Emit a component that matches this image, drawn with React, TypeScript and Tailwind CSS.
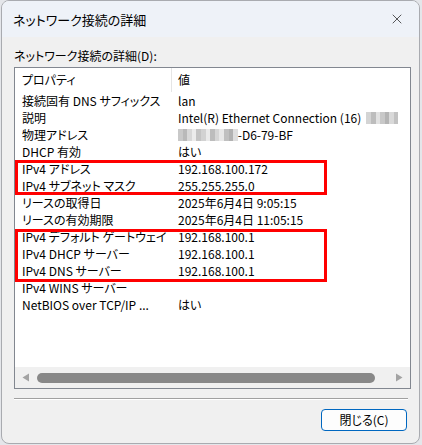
import { X } from "lucide-react"

const rows: { name: string; value: string; blur?: "tail" | "head" }[] = [
  { name: "接続固有 DNS サフィックス", value: "lan" },
  { name: "説明", value: "Intel(R) Ethernet Connection (16)", blur: "tail" },
  { name: "物理アドレス", value: "-D6-79-BF", blur: "head" },
  { name: "DHCP 有効", value: "はい" },
  { name: "IPv4 アドレス", value: "192.168.100.172" },
  { name: "IPv4 サブネット マスク", value: "255.255.255.0" },
  { name: "リースの取得日", value: "2025年6月4日 9:05:15" },
  { name: "リースの有効期限", value: "2025年6月4日 11:05:15" },
  { name: "IPv4 デフォルト ゲートウェイ", value: "192.168.100.1" },
  { name: "IPv4 DHCP サーバー", value: "192.168.100.1" },
  { name: "IPv4 DNS サーバー", value: "192.168.100.1" },
  { name: "IPv4 WINS サーバー", value: "" },
  { name: "NetBIOS over TCP/IP ...", value: "はい" },
]

const tailPixels = ["#d4d4d4", "#bdbdbd", "#e2e2e2", "#c8c8c8", "#b4b4b4", "#d9d9d9", "#c2c2c2"]
const headPixels = [
  "#c9c9c9", "#b9b9b9", "#d8d8d8", "#ececec", "#c4c4c4", "#d2d2d2", "#eaeaea",
  "#bdbdbd", "#d6d6d6", "#e8e8e8", "#c0c0c0", "#b2b2b2", "#dedede",
]

function Pixels({ colors }: { colors: string[] }) {
  return (
    <span className="inline-flex h-[12px] items-stretch">
      {colors.map((c, i) => (
        <span key={i} className="w-[4.6px]" style={{ backgroundColor: c }} />
      ))}
    </span>
  )
}

export default function App() {
  return (
    <div className="h-[445px] w-[422px] bg-[#e4e6ea] font-['Noto_Sans_CJK_JP','Noto_Sans',sans-serif] text-[12px] text-black [font-feature-settings:'palt']">
      <div className="ml-[1px] flex h-[444px] w-[419px] flex-col overflow-hidden rounded-[8px] border border-[#a9abb0] bg-[#f0f0f0]">
        {/* title bar */}
        <div className="flex h-[36px] shrink-0 items-center justify-between bg-[#eef2f8] pl-[11px] pr-[14px]">
          <span className="text-[13px] leading-none">ネットワーク接続の詳細</span>
          <X className="h-[16px] w-[16px] text-[#1b1b1b]" strokeWidth={1.1} />
        </div>

        <div className="flex flex-col px-[12px] pt-[11px]">
          <div className="leading-[16px]">ネットワーク接続の詳細(D):</div>

          {/* list view */}
          <div className="relative mt-[3px] flex h-[322px] w-[397px] flex-col border border-[#828790] bg-white">
            <div className="flex h-[24px] shrink-0 items-center">
              <div className="flex h-full w-[157px] items-center border-r border-[#e5e5e5] pl-[7px]">プロパティ</div>
              <div className="pl-[6px]">値</div>
            </div>
            <div className="flex flex-col">
              {rows.map((r) => (
                <div key={r.name} className="flex h-[17px] items-center whitespace-nowrap leading-[17px]">
                  <div className="w-[157px] shrink-0 pl-[7px]">{r.name}</div>
                  <div className="flex items-center pl-[6px]">
                    {r.blur === "head" && <Pixels colors={headPixels} />}
                    <span>{r.value}</span>
                    {r.blur === "tail" && (
                      <span className="ml-[5px] flex">
                        <Pixels colors={tailPixels} />
                      </span>
                    )}
                  </div>
                </div>
              ))}
            </div>

            {/* red annotations */}
            <div className="absolute left-[0px] top-[92px] h-[35px] w-[312px] border-[3px] border-[#ff0000]" />
            <div className="absolute left-[0px] top-[161px] h-[53px] w-[312px] border-[3px] border-[#ff0000]" />

            {/* horizontal scrollbar */}
            <div className="mt-auto flex h-[21px] items-center bg-[#f0f0f0] px-[7px]">
              <svg width="8" height="9" viewBox="0 0 8 9" className="shrink-0">
                <path d="M7 0.5 L0.5 4.5 L7 8.5 Z" fill="#a3a3a3" />
              </svg>
              <div className="mx-[7px] mr-[20px] h-[10px] flex-1 rounded-full bg-[#888888]" />
              <svg width="8" height="9" viewBox="0 0 8 9" className="shrink-0">
                <path d="M1 0.5 L7.5 4.5 L1 8.5 Z" fill="#a3a3a3" />
              </svg>
            </div>
          </div>

          {/* separator */}
          <div className="mt-[9px] h-[2px] w-[394px] border-t border-b border-t-[#a0a0a0] border-b-white" />

          <div className="mt-[9px] flex justify-end">
            <button className="flex h-[22px] w-[86px] items-center justify-center rounded-[4px] border border-[#0067c0] bg-[#fdfdfd] text-[12px] leading-none">
              閉じる(C)
            </button>
          </div>
        </div>
      </div>
    </div>
  )
}
